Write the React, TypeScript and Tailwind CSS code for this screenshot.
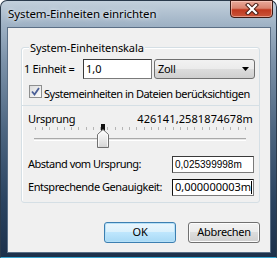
import React from 'react';

const ticks = Array.from({ length: 30 }, (_, i) => Math.round(1 + i * 7.24));

const Thumb = () => (
  <svg width="12" height="25" viewBox="0 0 12 25" className="absolute left-[63px] top-0">
    <defs>
      <linearGradient id="thumbFill" x1="0" y1="0" x2="0" y2="1">
        <stop offset="0" stopColor="#ffffff" />
        <stop offset="0.5" stopColor="#ececec" />
        <stop offset="1" stopColor="#d4d4d4" />
      </linearGradient>
    </defs>
    <rect x="4" y="0" width="4" height="7" fill="#111" />
    <path d="M0.5 23.5 V10.5 L6 5.5 L11.5 10.5 V23.5 Z" fill="url(#thumbFill)" stroke="#707070" />
    <path d="M1.5 22.5 V11 L6 7 L10.5 11 V22.5" fill="none" stroke="#ffffff" strokeOpacity="0.8" />
  </svg>
);

const TextBox = ({ children, className }: { children: React.ReactNode; className: string }) => (
  <div
    className={`bg-white border border-[#3a3a3a] border-b-[#7a7a7a] border-r-[#7a7a7a] flex items-center pl-[2px] overflow-hidden whitespace-nowrap tracking-normal ${className}`}>
    {children}
  </div>
);

export default function App() {
  return (
    <div className="w-[279px] h-[260px] bg-white font-['Noto_Sans',sans-serif] text-[11px] tracking-[-0.3px] text-black whitespace-nowrap">
      <div className="w-[277px] h-[258px] rounded-t-[7px] border border-[#2a3a4c] border-b-[#3aa6d0] bg-[linear-gradient(180deg,#c3d0dc_0px,#9fb2c5_24px,#7c92a9_60px,#4c6580_130px,#2a4360_200px,#1c304a_258px)] flex flex-col pl-[6px] pr-[5px] pb-[4px]">
        <div className="h-[26px] flex items-start justify-between">
          <span className="pl-[1px] pt-[5px] text-[11.5px] leading-[16px] tracking-[-0.1px] [text-shadow:0_0_6px_#e8eef4,0_0_3px_#e8eef4]">
            System-Einheiten einrichten
          </span>
          <div className="-mt-[1px] -mr-[2px] w-[43px] h-[18px] rounded-b-[4px] border border-[#3d1a14] bg-[linear-gradient(180deg,#e9a99a_0%,#d98470_45%,#c0391f_55%,#c9553a_100%)] flex items-center justify-center shadow-[inset_0_0_0_1px_rgba(255,220,210,0.5)]">
            <svg width="14" height="12" viewBox="0 0 14 12">
              <path d="M3 2 L11 10 M11 2 L3 10" stroke="#4a1e16" strokeWidth="4.2" strokeLinecap="square" />
              <path d="M3 2 L11 10 M11 2 L3 10" stroke="#ffffff" strokeWidth="2.2" strokeLinecap="square" />
            </svg>
          </div>
        </div>
        <div className="flex-1 border border-[#5b6f86] bg-[#f0f0f0] flex flex-col">
          <div className="ml-[13px] mt-[19px] w-[239px] h-[156px] border border-[#d5dfe5] rounded-[3px] flex flex-col shadow-[inset_1px_1px_0_#ffffff]">
            <span className="-mt-[8px] ml-[7px] px-[1px] self-start bg-[#f0f0f0] leading-[15px] tracking-[-0.1px]">
              System-Einheitenskala
            </span>
            <div className="mt-[4px] h-[20px] flex items-center pl-[2px]">
              <span className="w-[59px]">1 Einheit =</span>
              <TextBox className="w-[69px] h-[20px]">1,0</TextBox>
              <div className="ml-[2px] w-[101px] h-[20px] rounded-[3px] border border-[#707070] bg-[linear-gradient(180deg,#f2f2f2_0%,#ebebeb_50%,#dddddd_50%,#cfcfcf_100%)] flex items-center justify-between pl-[3px] pr-[5px]">
                <span>Zoll</span>
                <svg width="7" height="4" viewBox="0 0 7 4">
                  <path d="M0 0 H7 L3.5 4 Z" fill="#000" />
                </svg>
              </div>
            </div>
            <div className="mt-[6px] h-[13px] flex items-center pl-[7px]">
              <div className="w-[13px] h-[13px] shrink-0 border border-[#8e8f8f] bg-[linear-gradient(135deg,#dcdcdc,#fdfdfd)] flex items-center justify-center">
                <svg width="9" height="9" viewBox="0 0 9 9">
                  <path d="M1 4.5 L3.5 7.5 L8 1" fill="none" stroke="#4a5f97" strokeWidth="1.8" />
                </svg>
              </div>
              <span className="ml-[2px] leading-[13px] pt-[3px] tracking-[-0.5px]">
                Systemeinheiten in Dateien berücksichtigen
              </span>
            </div>
            <div className="mt-[7px] border-t border-[#d5dfe5]" />
            <div className="mt-[5px] h-[15px] flex items-center justify-between pl-[6px] pr-[6px] leading-[15px]">
              <span>Ursprung</span>
              <span className="tracking-[0.1px]">426141,2581874678m</span>
            </div>
            <div className="-mt-[2px] ml-[12px] w-[212px] h-[25px] relative">
              <svg width="212" height="6" className="absolute left-0 top-[2px]">
                {ticks.map((x) => (
                  <rect key={x} x={x} y="1" width="1" height="3" fill="#b5b5b5" />
                ))}
              </svg>
              <div className="absolute left-0 right-0 top-[14px] h-[3px] border-t border-[#a9a9a9] bg-[#e6e6e6] border-b border-b-white" />
              <Thumb />
            </div>
            <div className="mt-[7px] h-[17px] flex items-center pl-[6px] pr-[5px]">
              <span className="tracking-[-0.5px]">Abstand vom Ursprung:</span>
              <TextBox className="ml-auto w-[82px] h-[17px] font-['Liberation_Sans',sans-serif] text-[10px]">
                0,025399998m
              </TextBox>
            </div>
            <div className="mt-[6px] h-[17px] flex items-center pl-[6px] pr-[5px]">
              <span className="tracking-[-0.45px]">Entsprechende Genauigkeit:</span>
              <TextBox className="ml-auto w-[82px] h-[17px] border-[#111] tracking-[-0.1px]">
                <span>0,000000003m</span>
                <span className="w-[1px] h-[13px] bg-black shrink-0" />
              </TextBox>
            </div>
          </div>
          <div className="mt-[19px] flex justify-end gap-[12px] pr-[10px]">
            <button className="w-[72px] h-[21px] rounded-[3px] border border-[#3c7fb1] bg-[linear-gradient(180deg,#eaf6fd_0%,#d9f0fc_50%,#bee6fd_50%,#a7d9f5_100%)] shadow-[inset_0_0_0_1px_#b6e0f7] flex items-center justify-center">
              OK
            </button>
            <button className="w-[72px] h-[21px] rounded-[3px] border border-[#707070] bg-[linear-gradient(180deg,#f2f2f2_0%,#ebebeb_50%,#dddddd_50%,#cfcfcf_100%)] shadow-[inset_0_0_0_1px_#fcfcfc] flex items-center justify-center">
              Abbrechen
            </button>
          </div>
        </div>
      </div>
    </div>
  );
}
